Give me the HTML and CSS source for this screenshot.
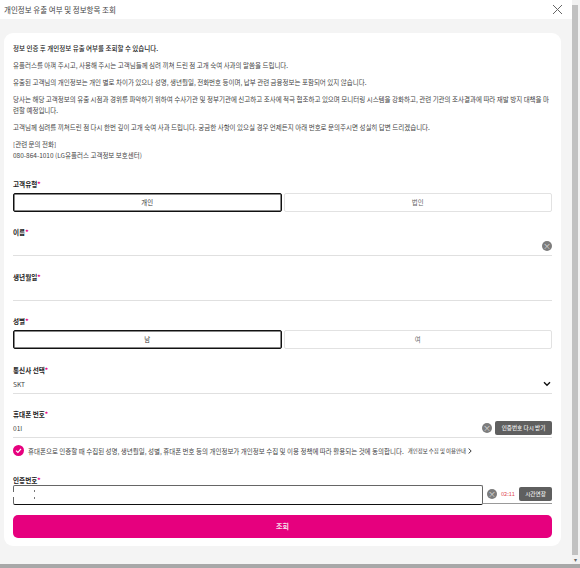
FILE: index.html
```html
<!DOCTYPE html>
<html>
    <head>
        <meta charset="UTF-8">
        <title>개인정보 유출 여부 및 정보항목 조회</title>
        <link rel="stylesheet" href="styles.css">
    </head>
    <body>
        <div class="window">
            <div class="main-col">
                <div class="title-bar">
                    <span class="title">개인정보 유출 여부 및 정보항목 조회</span>
                    <svg class="close-icon" width="11" height="11" viewBox="0 0 11 11">
                        <path d="M1 1 L10 10 M10 1 L1 10" stroke="#666" stroke-width="1" fill="none"></path>
                    </svg>
                </div>
                <div class="content">
                    <div class="card">
                        <div class="notice">
                            <p class="notice-head">정보 인증 후 개인정보 유출 여부를 조회할 수 있습니다.</p>
                            <p>유플러스를 아껴 주시고, 사용해 주시는 고객님들께 심려 끼쳐 드린 점 고개 숙여 사과의 말씀을 드립니다.</p>
                            <p>유출된 고객님의 개인정보는 개인 별로 차이가 있으나 성명, 생년월일, 전화번호 등이며, 납부 관련 금융정보는 포함되어 있지 않습니다.</p>
                            <p>당사는 해당 고객정보의 유출 시점과 경위를 파악하기 위하여 수사기관 및 정부기관에 신고하고 조사에 적극 협조하고 있으며 모니터링 시스템을 강화하고, 관련 기관의 조사결과에 따라 재발 방지 대책을 마련할 예정입니다.</p>
                            <p>고객님께 심려를 끼쳐드린 점 다시 한번 깊이 고개 숙여 사과 드립니다. 궁금한 사항이 있으실 경우 언제든지 아래 번호로 문의주시면 성실히 답변 드리겠습니다.</p>
                            <p>[관련 문의 전화]<br>080-864-1010 (LG유플러스 고객정보 보호센터)</p>
                        </div>

                        <div class="field field-type">
                            <div class="label">고객유형<span class="req">*</span></div>
                            <div class="toggle-row">
                                <div class="toggle on">개인</div>
                                <div class="toggle">법인</div>
                            </div>
                        </div>

                        <div class="field field-name">
                            <div class="label">이름<span class="req">*</span></div>
                            <div class="input-line">
                                <span class="grow"></span>
                                <span class="clear-btn">×</span>
                            </div>
                        </div>

                        <div class="field field-birth">
                            <div class="label">생년월일<span class="req">*</span></div>
                            <div class="input-line"></div>
                        </div>

                        <div class="field field-gender">
                            <div class="label">성별<span class="req">*</span></div>
                            <div class="toggle-row">
                                <div class="toggle on">남</div>
                                <div class="toggle">여</div>
                            </div>
                        </div>

                        <div class="field field-carrier">
                            <div class="label">통신사 선택<span class="req">*</span></div>
                            <div class="input-line line-carrier">
                                <span class="grow">SKT</span>
                                <svg width="8" height="6" viewBox="0 0 8 6">
                                    <path d="M1 1.2 L4 4.2 L7 1.2" stroke="#111" stroke-width="1.4" fill="none"></path>
                                </svg>
                            </div>
                        </div>

                        <div class="field field-phone">
                            <div class="label">휴대폰 번호<span class="req">*</span></div>
                            <div class="input-line">
                                <span class="grow">01I</span>
                                <span class="clear-btn">×</span>
                                <span class="small-btn btn-resend">인증번호 다시 받기</span>
                            </div>
                        </div>

                        <div class="agree-row">
                            <svg class="check-icon" width="11" height="11" viewBox="0 0 11 11">
                                <circle cx="5.5" cy="5.5" r="5.5" fill="#e6007e"></circle>
                                <path d="M3 5.6 L4.9 7.4 L8 3.9" stroke="#fff" stroke-width="1.2" fill="none"></path>
                            </svg>
                            <span class="agree-text">휴대폰으로 인증할 때 수집된 성명, 생년월일, 성별, 휴대폰 번호 등의 개인정보가 개인정보 수집 및 이용 정책에 따라 활용되는 것에 동의합니다.</span>
                            <span class="agree-link">개인정보 수집 및 이용안내</span>
                            <svg width="4" height="6" viewBox="0 0 4 6">
                                <path d="M0.6 0.5 L3.2 3 L0.6 5.5" stroke="#222" stroke-width="0.9" fill="none"></path>
                            </svg>
                        </div>

                        <div class="field field-code">
                            <div class="label">인증번호<span class="req">*</span></div>
                            <div class="code-row">
                                <div class="code-input"></div>
                                <div class="code-side">
                                    <span class="clear-btn">×</span>
                                    <span class="timer">02:11</span>
                                    <span class="small-btn btn-extend">시간연장</span>
                                </div>
                            </div>
                        </div>

                        <div class="submit-btn">조회</div>
                    </div>
                </div>
            </div>
            <div class="scrollbar">
                <div class="scroll-arrow arrow-top"></div>
                <div class="scroll-thumb"></div>
                <div class="scroll-arrow">▾</div>
            </div>
        </div>
        <div class="window-edge"></div>
    </body>
</html>
```

FILE: styles.css
```css
html, body {
    margin: 0;
    padding: 0;
    height: 568px;
    overflow: hidden;
    background-color: #f4f4f4;
    font-family: "Noto Sans CJK KR", "Noto Sans", sans-serif;
    color: #333;
}

.window {
    display: flex;
    height: 564px;
}

.main-col {
    flex: 1;
    min-width: 0;
}

.window-edge {
    height: 4px;
    background-color: #a8a8a8;
}

.title-bar {
    display: flex;
    align-items: center;
    justify-content: space-between;
    height: 19px;
    padding: 0 9px 0 4px;
    background-color: #fff;
}

.title {
    font-size: 7.5px;
    color: #444;
}

.content {
    padding: 14px 11px 0 4px;
}

.card {
    height: 513px;
    box-sizing: border-box;
    padding: 10px 9px 0 9px;
    border-radius: 9px;
    background-color: #fff;
}

.notice {
    height: 127px;
    font-size: 6.5px;
    line-height: 11px;
    word-break: break-all;
    color: #444;
}

.notice p {
    margin: 0 0 6px 0;
}

.notice .notice-head {
    font-weight: 500;
    color: #222;
}

.label {
    height: 10px;
    font-size: 6.6px;
    line-height: 10px;
    font-weight: 700;
    color: #222;
}

.req {
    color: #e6007e;
}

.field-type { margin-top: 9px; }
.field-name { margin-top: 15px; }
.field-birth { margin-top: 16px; }
.field-gender { margin-top: 15px; }
.field-carrier { margin-top: 16px; }
.field-phone { margin-top: 15px; }
.field-code { margin-top: 18px; }

.toggle-row {
    display: flex;
    gap: 2px;
    margin-top: 4px;
}

.toggle {
    flex: 1;
    height: 19px;
    box-sizing: border-box;
    border: 1px solid #e2e2e2;
    border-radius: 2px;
    text-align: center;
    font-size: 6.4px;
    line-height: 17px;
    color: #666;
}

.toggle.on {
    border: 1px solid #111;
    box-shadow: inset 0 0 0 0.5px #111;
    color: #333;
}

.input-line {
    display: flex;
    align-items: center;
    gap: 3px;
    height: 19px;
    box-sizing: border-box;
    border-bottom: 1px solid #e0e0e0;
    font-size: 6.6px;
    color: #444;
}

.line-carrier {
    padding-right: 1px;
}

.grow {
    flex: 1;
}

.clear-btn {
    display: flex;
    align-items: center;
    justify-content: center;
    flex: none;
    width: 10px;
    height: 10px;
    border-radius: 50%;
    background-color: #7c7c7c;
    font-size: 8px;
    line-height: 10px;
    color: #ddd;
}

.small-btn {
    display: flex;
    align-items: center;
    justify-content: center;
    flex: none;
    height: 14px;
    border-radius: 2px;
    background-color: #5f5f5f;
    font-size: 5.6px;
    font-weight: 500;
    color: #eee;
}

.btn-resend { width: 57px; }
.btn-extend { width: 33px; }

.agree-row {
    display: flex;
    align-items: center;
    height: 13px;
    margin-top: 6px;
    font-size: 6.5px;
    white-space: nowrap;
    color: #444;
}

.check-icon {
    flex: none;
    margin-right: 4px;
}

.agree-link {
    margin: 0 2px 0 4px;
    font-size: 5.4px;
    color: #333;
}

.code-row {
    display: flex;
}

.code-input {
    position: relative;
    width: 470px;
    height: 20px;
    box-sizing: border-box;
    border: 1px solid #666;
    border-bottom-color: #111;
    border-radius: 2px;
}

/* redacted digits: white patch over the left border and two small ticks */
.code-input::before {
    content: "";
    position: absolute;
    left: -2px;
    top: 6px;
    width: 4px;
    height: 5px;
    background-color: #fff;
}

.code-input::after {
    content: "";
    position: absolute;
    left: 20px;
    top: 4px;
    width: 1px;
    height: 10px;
    background: linear-gradient(#777 0 2px, transparent 2px 7px, #777 7px 9px, transparent 9px);
}

.code-side {
    flex: 1;
    display: flex;
    align-items: center;
    gap: 3px;
    box-sizing: border-box;
    height: 19px;
    padding-left: 4px;
    border-bottom: 1px solid #999;
}

.timer {
    flex: 1;
    font-size: 5.6px;
    text-align: center;
    color: #e0484f;
}

.submit-btn {
    height: 23px;
    margin-top: 10px;
    border-radius: 5px;
    background-color: #e6007e;
    text-align: center;
    font-size: 7px;
    font-weight: 700;
    line-height: 23px;
    color: #f5e0ec;
}

.scrollbar {
    display: flex;
    flex-direction: column;
    flex: none;
    width: 8px;
    background-color: #f1f1f1;
}

.scroll-thumb {
    flex: 1;
    margin-right: 2px;
    background-color: #c1c1c1;
}

.scroll-arrow {
    height: 9px;
    padding-right: 2px;
    font-size: 6px;
    line-height: 9px;
    text-align: center;
    color: #666;
}

.arrow-top {
    height: 5px;
}
```
